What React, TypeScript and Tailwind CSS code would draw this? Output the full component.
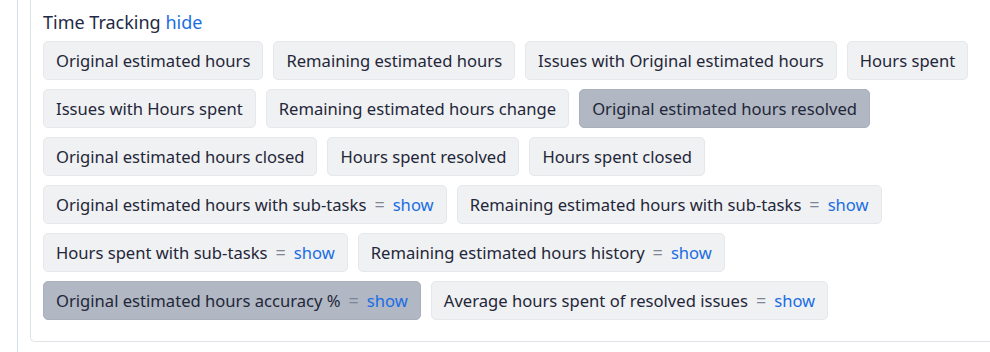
import React from 'react';

type Chip = { label: string; active?: boolean; link?: boolean };

const rows: Chip[][] = [
  [
    { label: 'Original estimated hours' },
    { label: 'Remaining estimated hours' },
    { label: 'Issues with Original estimated hours' },
    { label: 'Hours spent' },
  ],
  [
    { label: 'Issues with Hours spent' },
    { label: 'Remaining estimated hours change' },
    { label: 'Original estimated hours resolved', active: true },
  ],
  [
    { label: 'Original estimated hours closed' },
    { label: 'Hours spent resolved' },
    { label: 'Hours spent closed' },
  ],
  [
    { label: 'Original estimated hours with sub-tasks', link: true },
    { label: 'Remaining estimated hours with sub-tasks', link: true },
  ],
  [
    { label: 'Hours spent with sub-tasks', link: true },
    { label: 'Remaining estimated hours history', link: true },
  ],
  [
    { label: 'Original estimated hours accuracy %', active: true, link: true },
    { label: 'Average hours spent of resolved issues', link: true },
  ],
];

const MetricChip: React.FC<{ chip: Chip }> = ({ chip }) => (
  <button
    className={
      'h-[39px] px-3 rounded-[5px] border text-[16.6px] leading-[24px] text-[#1f2739] whitespace-nowrap ' +
      (chip.active
        ? 'bg-[#b1b7c3] border-[#a9afbb]'
        : 'bg-[#f0f1f3] border-[#e5e7ea]')
    }
  >
    {chip.label}
    {chip.link && (
      <>
        <span className="text-[#7e8696] text-[18px] mx-[8px]">=</span>
        <span className="text-[#1a6de4]">show</span>
      </>
    )}
  </button>
);

export default function App() {
  return (
    <div
      className="h-[352px] w-[990px] overflow-hidden bg-white flex"
      style={{ fontFamily: '"Noto Sans", "Open Sans", sans-serif' }}
    >
      <div className="ml-[17px] border-l border-[#d6ddf2] pl-[12px] flex-1 flex flex-col">
        <div className="border-l border-b border-[#dfe2e6] rounded-bl-[5px] pl-[12px] pt-[9px] pb-[21px] mr-[-20px]">
          <h3 className="text-[18px] leading-[27px] text-[#1f2a44] mb-[5px]">
            Time Tracking <span className="text-[#1a6de4]">hide</span>
          </h3>
          {/* Metrics */}
          <div className="flex flex-col gap-[9px]">
            {rows.map((row, i) => (
              <div key={i} className="flex gap-[10px]">
                {row.map((chip) => (
                  <MetricChip key={chip.label} chip={chip} />
                ))}
              </div>
            ))}
          </div>
        </div>
      </div>
    </div>
  );
}
